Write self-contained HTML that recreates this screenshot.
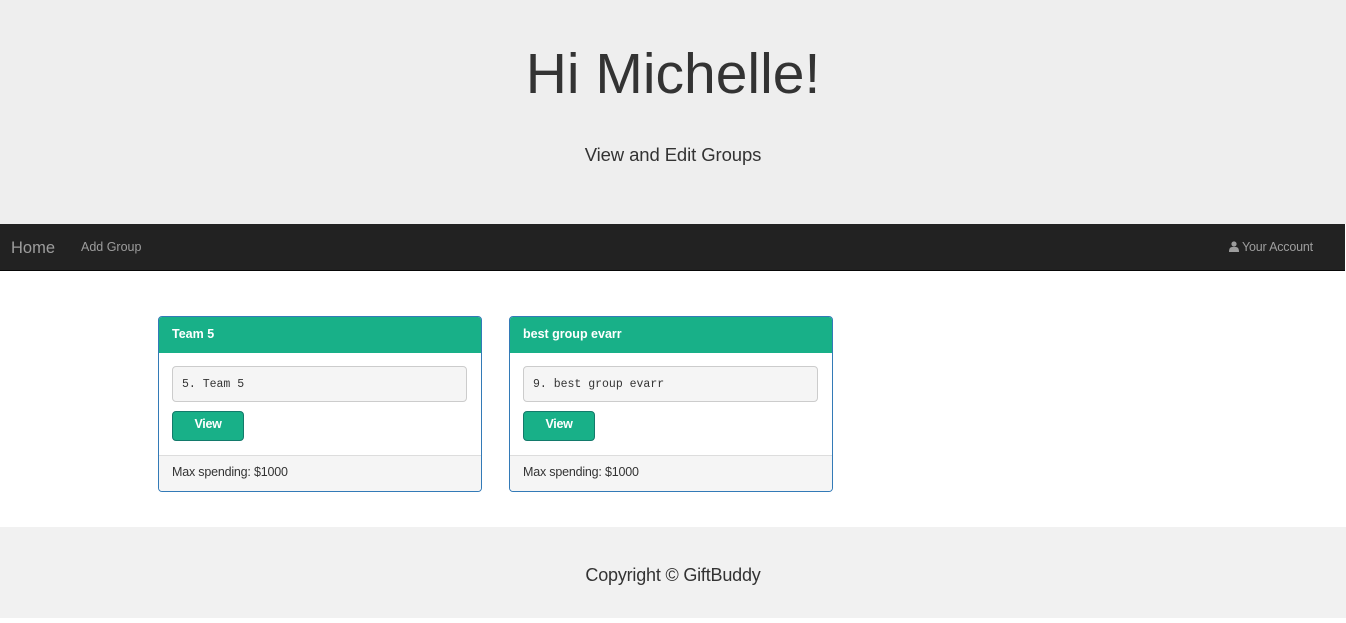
<!DOCTYPE html>
<html><head><style>
body{margin:0;font-family:"Liberation Sans",sans-serif;background:#fff;width:1346px;height:618px;overflow:hidden;position:relative}
.jumbo{position:absolute;left:0;top:0;width:1346px;height:224px;background:#eee;text-align:center;color:#333}
.jumbo h1{position:absolute;top:41px;width:100%;margin:0;font-size:57px;font-weight:normal}
.jumbo p{position:absolute;top:144px;width:100%;margin:0;font-size:18.5px;letter-spacing:-0.1px}
.nav{position:absolute;left:0;top:224px;width:1345px;height:46px;background:#222;border-bottom:1px solid #080808}
.nav span{position:absolute;color:#9d9d9d}
.main{position:absolute;top:271px;left:0;width:1345px;height:256px;background:#fff}
.card{position:absolute;top:316px;width:322px;height:174px;border:1px solid #337ab7;border-radius:4px;overflow:hidden;background:#fff}
.hd{height:36px;background:#18b088;color:#fff;font-weight:bold;font-size:12.5px;line-height:34px;padding-left:13px}
.pre{position:absolute;left:13px;top:49px;width:295px;height:36px;box-sizing:border-box;background:#f5f5f5;border:1px solid #ccc;border-radius:4px;font-family:"Liberation Mono",monospace;font-size:11.5px;line-height:36px;padding-left:9px;color:#333}
.btn{position:absolute;left:13px;top:94px;width:72px;height:30px;box-sizing:border-box;background:#18b088;border:1px solid #137a6b;border-radius:4px;color:#fff;font-weight:bold;font-size:12.5px;text-align:center;line-height:25px;letter-spacing:-0.3px}
.ft{position:absolute;left:0;top:138px;width:100%;height:36px;background:#f5f5f5;border-top:1px solid #ddd;font-size:12.5px;color:#333;line-height:33px;padding-left:13px;box-sizing:border-box;letter-spacing:-0.2px}
.foot{position:absolute;top:527px;left:0;width:1346px;height:91px;background:#f1f1f1;text-align:center;font-size:18px;color:#333;line-height:96px;letter-spacing:-0.2px}
</style></head><body>
<div class="jumbo"><h1>Hi Michelle!</h1><p>View and Edit Groups</p></div>
<div class="nav">
<span style="left:11px;top:15px;font-size:16.5px">Home</span>
<span style="left:81px;top:16px;font-size:12.5px">Add Group</span>
<span style="left:1229px;top:16px;font-size:12.5px;letter-spacing:-0.2px"><svg width="10" height="11" viewBox="0 0 10 11" style="vertical-align:-1px"><circle cx="5" cy="3" r="2.6" fill="#9d9d9d"/><path d="M0 11 Q0 6 3 6 L7 6 Q10 6 10 11Z" fill="#9d9d9d"/></svg> Your Account</span>
</div>
<div class="main"></div>
<div class="card" style="left:158px"><div class="hd">Team 5</div><div class="pre">5. Team 5</div><div class="btn">View</div><div class="ft">Max spending: $1000</div></div>
<div class="card" style="left:509px"><div class="hd">best group evarr</div><div class="pre">9. best group evarr</div><div class="btn">View</div><div class="ft">Max spending: $1000</div></div>
<div class="foot">Copyright © GiftBuddy</div>
</body></html>
